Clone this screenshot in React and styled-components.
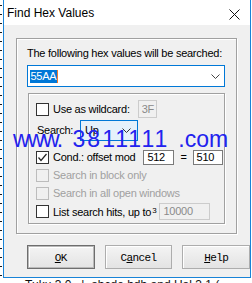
import React from "react";
import styled, { createGlobalStyle } from "styled-components";

const Global = createGlobalStyle`
  html, body { margin: 0; padding: 0; background: #ffffff; }
  body { font-family: "Liberation Sans", Arial, sans-serif; }
`;

const Page = styled.div`
  position: relative;
  width: 252px;
  height: 283px;
  overflow: hidden;
  display: flex;
  flex-direction: column;
  background: #ffffff;
  font-family: "Liberation Sans", Arial, sans-serif;
  font-size: 11px;
  letter-spacing: -0.25px;
  color: #000;
`;

const Middle = styled.div`
  display: flex;
  height: 278px;
`;

const LeftStrip = styled.div`
  width: 3px;
  background:
    repeating-linear-gradient(
      to bottom,
      transparent 0px,
      transparent 5px,
      #1a1a1a 5px,
      #1a1a1a 6px,
      transparent 6px,
      transparent 9px
    );
  background-size: 2px 100%;
  background-repeat: no-repeat;
`;

const RightStrip = styled.div`
  width: 1px;
  background: #ffffff;
`;

const Dialog = styled.div`
  width: 246px;
  display: flex;
  flex-direction: column;
  border-left: 1px solid #1883d7;
  border-right: 1px solid #1883d7;
  border-bottom: 1px solid #1883d7;
`;

const TitleBar = styled.div`
  height: 25px;
  background: #ffffff;
  display: flex;
  align-items: flex-start;
  justify-content: space-between;
`;

const Title = styled.div`
  font-size: 12px;
  line-height: 12px;
  letter-spacing: 0;
  padding: 7px 0 0 3px;
  color: #000;
`;

const CloseBox = styled.div`
  width: 11px;
  height: 11px;
  margin: 9px 10px 0 0;
  display: flex;
`;

const Body = styled.div`
  flex: 1;
  background: #f0f0f0;
  display: flex;
  flex-direction: column;
  padding: 13px 0 0 12px;
`;

const GroupBox = styled.div`
  box-sizing: border-box;
  display: flex;
  flex-direction: column;
  border: 1px solid #a0a0a0;
  box-shadow: inset 1px 1px 0 #ffffff, 1px 1px 0 #ffffff;
  width: ${(p) => p.$w}px;
  height: ${(p) => p.$h}px;
  margin-top: ${(p) => p.$mt || 0}px;
  margin-left: ${(p) => p.$ml || 0}px;
  padding: ${(p) => p.$pad};
`;

const GroupLabel = styled.div`
  line-height: 13px;
  height: 13px;
  white-space: nowrap;
`;

const Combo = styled.div`
  box-sizing: border-box;
  width: ${(p) => p.$w}px;
  height: ${(p) => p.$h}px;
  margin-top: ${(p) => p.$mt || 0}px;
  margin-left: ${(p) => p.$ml || 0}px;
  border: 1px solid #0078d7;
  background: ${(p) => p.$bg || "#ffffff"};
  display: flex;
  align-items: center;
  justify-content: space-between;
  padding: 0 ${(p) => p.$pr || 4}px 0 ${(p) => p.$pl || 2}px;
`;

const Selected = styled.span`
  background: #0078d7;
  color: #ffffff;
  line-height: 13px;
  height: 13px;
  padding: 0 0.5px;
  border-right: 1px solid #f07a2a;
`;

const ComboText = styled.span`
  line-height: 13px;
`;

const Row = styled.div`
  display: flex;
  align-items: center;
  height: ${(p) => p.$h}px;
  margin-top: ${(p) => p.$mt || 0}px;
  white-space: nowrap;
`;

const Box = styled.div`
  box-sizing: border-box;
  width: 13px;
  height: 13px;
  flex: none;
  border: 1px solid ${(p) => (p.$disabled ? "#bcbcbc" : "#333333")};
  background: ${(p) => (p.$disabled ? "#f0f0f0" : "#ffffff")};
  display: flex;
  align-items: center;
  justify-content: center;
`;

const CheckLabel = styled.span`
  margin-left: 4px;
  line-height: 13px;
  color: ${(p) => (p.$disabled ? "#a0a0a0" : "#000000")};
`;

const Sup = styled.span`
  font-size: 8px;
  vertical-align: 3px;
  margin-left: 1px;
`;

const Field = styled.div`
  box-sizing: border-box;
  width: ${(p) => p.$w}px;
  height: ${(p) => p.$h}px;
  margin-left: ${(p) => p.$ml || 0}px;
  border: 1px solid ${(p) => (p.$disabled ? "#cccccc" : "#7a7a7a")};
  background: ${(p) => (p.$disabled ? "#f0f0f0" : "#ffffff")};
  color: ${(p) => (p.$disabled ? "#8a8a8a" : "#000000")};
  display: flex;
  align-items: center;
  padding-left: 3px;
  line-height: 13px;
`;

const Equals = styled.span`
  margin-left: 6px;
  line-height: 13px;
`;

const SearchLabel = styled.span`
  width: 43px;
  margin-left: 1px;
  line-height: 13px;
`;

const ButtonRow = styled.div`
  display: flex;
  gap: 10px;
  margin-top: 11px;
  margin-left: 11px;
`;

const Button = styled.div`
  box-sizing: border-box;
  width: 68px;
  height: 24px;
  display: flex;
  align-items: center;
  justify-content: center;
  background: linear-gradient(#f4f4f4, #e3e3e3);
  border: 1px solid ${(p) => (p.$default ? "#6e6e6e" : "#adadad")};
  box-shadow: ${(p) =>
    p.$default
      ? "inset 0 0 0 1px #b9b9b9, inset 2px 2px 0 #ffffff"
      : "inset 1px 1px 0 #ffffff"};
  font-family: "Liberation Mono", "Courier New", monospace;
  font-size: 11px;
  letter-spacing: -0.6px;
  color: #000;
  padding-top: 1px;
`;

const Ul = styled.span`
  text-decoration: underline;
  text-underline-offset: 1px;
`;

const BottomStrip = styled.div`
  height: 5px;
  overflow: hidden;
  background: #ffffff;
  font-size: 12px;
  line-height: 12px;
  letter-spacing: 0;
  white-space: nowrap;
  padding: 1px 0 0 10px;
  box-sizing: border-box;
  color: #111;
`;

const Watermark = styled.div`
  position: absolute;
  left: 13px;
  top: 128px;
  font-family: "Liberation Sans", Arial, sans-serif;
  font-size: 23px;
  line-height: 23px;
  color: #2222ee;
  white-space: nowrap;
  letter-spacing: 0;
  pointer-events: none;
`;

const WmPart = styled.span`
  letter-spacing: ${(p) => p.$ls}px;
  margin-left: ${(p) => p.$ml || 0}px;
`;

const Chevron = ({ color = "#444" }) => (
  <svg width="9" height="5" viewBox="0 0 9 5">
    <polyline points="0.5,0.5 4.5,4.5 8.5,0.5" fill="none" stroke={color} strokeWidth="1" />
  </svg>
);

const CheckMark = () => (
  <svg width="11" height="11" viewBox="0 0 11 11">
    <polyline points="1.5,5.5 4,8.5 9.5,2" fill="none" stroke="#222" strokeWidth="1.2" />
  </svg>
);

const Check = ({ checked, disabled, children }) => (
  <>
    <Box $disabled={disabled}>{checked && <CheckMark />}</Box>
    <CheckLabel $disabled={disabled}>{children}</CheckLabel>
  </>
);

export default function App() {
  return (
    <>
      <Global />
      <Page>
        <Middle>
          <LeftStrip />
          <Dialog>
            <TitleBar>
              <Title>Find Hex Values</Title>
              <CloseBox>
                <svg width="11" height="11" viewBox="0 0 11 11">
                  <path d="M0.5 0.5 L10.5 10.5 M10.5 0.5 L0.5 10.5" stroke="#111" strokeWidth="1" />
                </svg>
              </CloseBox>
            </TitleBar>
            <Body>
              <GroupBox $w={221} $h={196} $pad="8px 0 0 10px">
                <GroupLabel>The following hex values will be searched:</GroupLabel>
                <Combo $w={198} $h={22} $mt={5} $pr={4}>
                  <Selected>55AA</Selected>
                  <Chevron />
                </Combo>
                <GroupBox $w={197} $h={131} $mt={6} $ml={1} $pad="6px 0 0 7px">
                  <Row $h={18}>
                    <Check>Use as wildcard:</Check>
                    <Field $w={19} $h={18} $ml={8} $disabled>3F</Field>
                  </Row>
                  <Row $h={21} $mt={2}>
                    <SearchLabel>Search:</SearchLabel>
                    <Combo $w={58} $h={21} $bg="#e5f1fb" $pl={4} $pr={6}>
                      <ComboText>Up</ComboText>
                      <Chevron color="#333" />
                    </Combo>
                  </Row>
                  <Row $h={16} $mt={8}>
                    <Check checked>Cond.: offset mod</Check>
                    <Field $w={31} $h={15} $ml={8}>512</Field>
                    <Equals>=</Equals>
                    <Field $w={30} $h={15} $ml={6}>510</Field>
                  </Row>
                  <Row $h={18} $mt={1}>
                    <Check disabled>Search in block only</Check>
                  </Row>
                  <Row $h={18}>
                    <Check disabled>Search in all open windows</Check>
                  </Row>
                  <Row $h={18}>
                    <Check>
                      List search hits, up to<Sup>3</Sup>
                    </Check>
                    <Field $w={51} $h={17} $ml={3} $disabled>10000</Field>
                  </Row>
                </GroupBox>
              </GroupBox>
              <ButtonRow>
                <Button $default>
                  <Ul>O</Ul>K
                </Button>
                <Button>
                  C<Ul>a</Ul>ncel
                </Button>
                <Button>
                  <Ul>H</Ul>elp
                </Button>
              </ButtonRow>
            </Body>
          </Dialog>
          <RightStrip />
        </Middle>
        <BottomStrip>— Tuku 3.0 &nbsp; | &nbsp;abcde hdb and Hal 3.1 (</BottomStrip>
        <Watermark>
          <WmPart $ls={-1.6}>www.</WmPart>
          <WmPart $ls={2} $ml={11}>3811111</WmPart>
          <WmPart $ls={0} $ml={9}>.com</WmPart>
        </Watermark>
      </Page>
    </>
  );
}
